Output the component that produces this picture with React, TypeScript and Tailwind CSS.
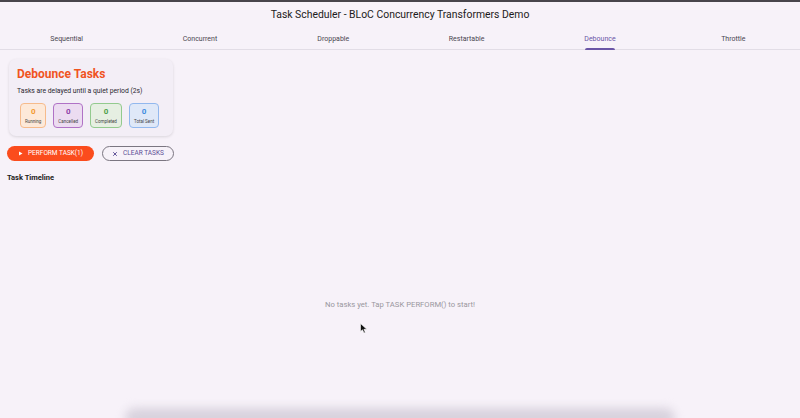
const tabs = ["Sequential", "Concurrent", "Droppable", "Restartable", "Debounce", "Throttle"]

const stats = [
  { label: "Running", box: "bg-[#fde9d9] border-[#f6bb8c]", num: "text-[#f39a2e]" },
  { label: "Cancelled", box: "bg-[#ecdcf1] border-[#b072c6]", num: "text-[#8e3fa8]" },
  { label: "Completed", box: "bg-[#e6efe2] border-[#93ca8e]", num: "text-[#4e9f4a]" },
  { label: "Total Sent", box: "bg-[#dfe8f8] border-[#92b8ee]", num: "text-[#3f8be0]" },
]

function StatBox({ label, box, num }: { label: string; box: string; num: string }) {
  return (
    <div className={`flex h-[25px] flex-col items-center justify-center rounded-[4px] border px-[4px] ${box}`}>
      <span className={`text-[8px] font-bold leading-[10px] ${num}`}>0</span>
      <span className="mt-[2px] whitespace-nowrap text-[4.5px] leading-[6px] text-[#444]">{label}</span>
    </div>
  )
}

export default function App() {
  const active = "Debounce"
  return (
    <div className="relative flex h-[418px] w-[800px] flex-col overflow-hidden bg-[#f7f2f9] font-['Roboto',sans-serif] text-[#1d1b20]">
      <div className="h-[2px] bg-[#48454c]" />

      {/* app bar */}
      <div className="flex h-[26px] items-center justify-center">
        <h1 className="text-[10.4px] leading-none">Task Scheduler - BLoC Concurrency Transformers Demo</h1>
      </div>

      {/* tabs */}
      <div className="flex h-[22px] border-b border-[#e2dde6]">
        {tabs.map((t) => (
          <div key={t} className="relative flex flex-1 items-center justify-center pt-[1px]">
            <span className={`text-[7px] ${t === active ? "text-[#6a55a6]" : "text-[#4a4650]"}`}>{t}</span>
            {t === active && (
              <span className="absolute bottom-[-1px] h-[2px] w-[30px] rounded-t-sm bg-[#6a55a6]" />
            )}
          </div>
        ))}
      </div>

      <div className="flex flex-col px-[7px] pt-[9px]">
        {/* card */}
        <div className="ml-[2px] w-[164px] rounded-[7px] bg-[#f3eef6] px-[8px] pb-[8px] pt-[8px] shadow-[0_1px_3px_rgba(0,0,0,0.12)]">
          <h2 className="text-[12px] font-bold leading-[14px] text-[#f0541f]">Debounce Tasks</h2>
          <p className="mt-[6px] text-[6.8px] leading-[8px] text-[#2a2730]">Tasks are delayed until a quiet period (2s)</p>
          <div className="mt-[8px] flex gap-[7px] pl-[3px]">
            {stats.map((s) => (
              <StatBox key={s.label} {...s} />
            ))}
          </div>
        </div>

        {/* buttons */}
        <div className="mt-[10px] flex gap-[8px]">
          <button className="flex h-[15px] w-[87px] items-center justify-center gap-[5px] rounded-full bg-[#fb4c1d] text-[6.5px] text-white">
            <svg width="5" height="5" viewBox="0 0 10 10"><path d="M2 1 L9 5 L2 9 Z" fill="white" /></svg>
            PERFORM TASK(1)
          </button>
          <button className="flex h-[15px] w-[72px] items-center justify-center gap-[5px] rounded-full border border-[#7b7681] text-[6.5px] text-[#5d4f96]">
            <svg width="6" height="6" viewBox="0 0 10 10"><path d="M2 2 L8 8 M8 2 L2 8" stroke="#5d4f96" strokeWidth="1.6" /></svg>
            CLEAR TASKS
          </button>
        </div>

        <h3 className="mt-[12px] text-[7.5px] font-bold leading-[10px] text-[#1d1b20]">Task Timeline</h3>
      </div>

      {/* empty state */}
      <div className="flex flex-1 items-center justify-center pt-[8px]">
        <p className="text-[7.7px] text-[#9a979e]">No tasks yet. Tap TASK PERFORM() to start!</p>
      </div>

      {/* bottom shadow */}
      <div className="absolute bottom-[-10px] left-[125px] h-[20px] w-[550px] rounded-full bg-[#d8d2dd] blur-[5px]" />

      {/* cursor */}
      <svg className="absolute left-[360px] top-[323px]" width="8" height="11" viewBox="0 0 8 11">
        <path d="M0.5 0.5 L0.5 8.5 L2.5 6.8 L4 10 L5.3 9.4 L3.9 6.3 L6.8 6.3 Z" fill="#111" stroke="#fff" strokeWidth="0.6" />
      </svg>
    </div>
  )
}
